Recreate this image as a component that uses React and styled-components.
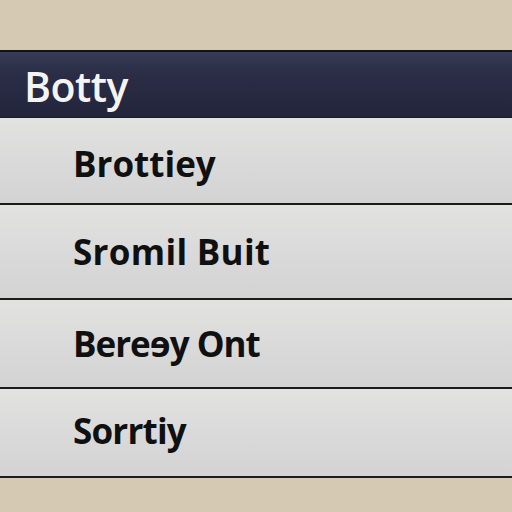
import React from "react";
import styled, { createGlobalStyle } from "styled-components";

const Global = createGlobalStyle`
  html, body { margin: 0; padding: 0; }
  body {
    background: #d6c9b4;
    width: 512px;
    height: 512px;
    overflow: hidden;
    font-family: "Open Sans", "Noto Sans", sans-serif;
  }
`;

const Page = styled.div`
  padding-top: 50px;
`;

const Panel = styled.div`
  display: flex;
  flex-direction: column;
  border-top: 2px solid #121318;
`;

const Header = styled.div`
  height: 66px;
  display: flex;
  align-items: center;
  padding-left: 24px;
  background: linear-gradient(180deg, #373b56 0%, #2a2d45 35%, #22253a 100%);
  border-bottom: 1px solid #1a1c2a;
  box-sizing: border-box;
`;

const Title = styled.span`
  color: #f4f4f4;
  font-size: 41px;
  font-weight: 600;
  letter-spacing: -0.5px;
  margin-top: 2px;
`;

const Row = styled.div`
  height: ${(p) => p.$h}px;
  display: flex;
  align-items: center;
  padding-left: 73px;
  box-sizing: border-box;
  background: linear-gradient(180deg, #e2e2e1 0%, #dadada 50%, #d3d3d3 100%);
  border-bottom: 2px solid #1b1b1b;
`;

const Label = styled.span`
  color: #101010;
  font-size: 35px;
  font-weight: 700;
  letter-spacing: ${(p) => p.$ls}px;
  margin-top: ${(p) => p.$dy || 0}px;
`;

const rows = [
  { text: "Brottiey", h: 87, dy: 6, ls: 0 },
  { text: "Sromil Buit", h: 95, dy: 0, ls: 0.3 },
  { text: "Bereɘy Ont", h: 89, dy: 0, ls: -1 },
  { text: "Sorrtiy", h: 89, dy: -4, ls: -0.8 },
];

export default function App() {
  return (
    <>
      <Global />
      <Page>
        <Panel>
          <Header>
            <Title>Botty</Title>
          </Header>
          {rows.map((r) => (
            <Row key={r.text} $h={r.h}>
              <Label $dy={r.dy} $ls={r.ls}>{r.text}</Label>
            </Row>
          ))}
        </Panel>
      </Page>
    </>
  );
}
